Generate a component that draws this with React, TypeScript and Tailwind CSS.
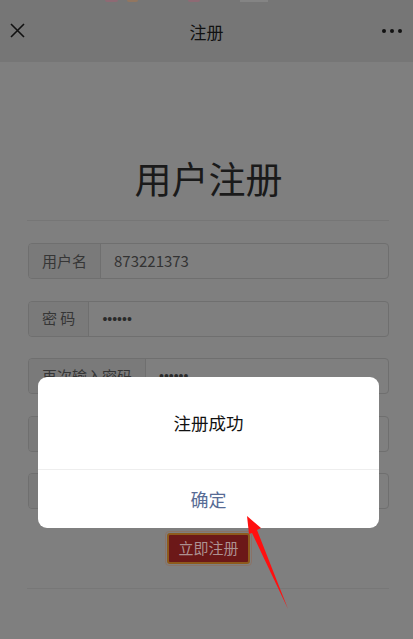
import React from "react";

const FONT = { fontFamily: '"Noto Sans CJK SC", "Noto Sans", Roboto, sans-serif' };

function Row({ label, value, dots }: { label: string; value?: string; dots?: boolean }) {
  return (
    <div className="flex h-[36px] rounded-[4px] border border-[#6f6f6f] overflow-hidden">
      <div className="flex items-center px-[13px] bg-[#7a7a7a] border-r border-[#6f6f6f] text-[15px] text-[#363636] whitespace-pre">
        {label}
      </div>
      <div className="flex items-center pl-[13px] text-[15px] text-[#333333]">
        {dots ? (
          <span
            className="text-[14px] leading-none text-[#2a2a2a]"
            style={{ fontFamily: '"Liberation Sans", Arial, sans-serif' }}
          >
            ••••••
          </span>
        ) : (
          value
        )}
      </div>
    </div>
  );
}

export default function App() {
  return (
    <div className="relative w-[413px] h-[639px] overflow-hidden bg-[#7f7f7f]" style={FONT}>
      {/* header */}
      <div className="relative h-[62px] bg-[#767676] grid grid-cols-[1fr_auto_1fr] items-center px-[10px]">
        <div className="absolute top-0 left-[105px] w-[13px] h-[2px] rounded-b-full bg-[#8e6a74]" />
        <div className="absolute top-0 left-[127px] w-[11px] h-[2px] rounded-b-full bg-[#927660]" />
        <div className="absolute top-0 left-[188px] w-[12px] h-[2px] rounded-b-full bg-[#8e6a74]" />
        <div className="absolute top-0 left-[240px] w-[28px] h-[2px] bg-[#848484]" />
        <div className="flex items-center">
          <svg width="15" height="15" viewBox="0 0 15 15" className="mt-[-1px]">
            <path d="M1 1 L14 14 M14 1 L1 14" stroke="#111" strokeWidth="1.6" />
          </svg>
        </div>
        <div className="text-[17px] text-[#111] leading-none">注册</div>
        <div className="flex justify-end items-center gap-[4px] pr-[1px]">
          <span className="w-[4px] h-[4px] rounded-full bg-[#111]" />
          <span className="w-[4px] h-[4px] rounded-full bg-[#111]" />
          <span className="w-[4px] h-[4px] rounded-full bg-[#111]" />
        </div>
      </div>

      {/* page content */}
      <div className="pl-[28px] pr-[24px]">
        <div className="mt-[94px] text-center text-[37px] leading-[44px] text-[#1a1a1a]">用户注册</div>
        <div className="mt-[20px] h-px bg-[#767676] ml-[-1px]" />
        <div className="mt-[22px] flex flex-col gap-[21.5px]">
          <Row label="用户名" value="873221373" />
          <Row label="密 码" dots />
          <Row label="再次输入密码" dots />
          <Row label="手机号码" />
          <Row label="邮 箱" />
        </div>
        <div className="mt-[22px] flex justify-center">
          <div className="h-[35px] w-[87px] rounded-[4px] border border-[#8a7266] p-px">
            <div className="h-full w-full rounded-[3px] border-2 border-[#8e5a1c] bg-[#6c1818] flex items-center justify-center text-[15px] text-[#ad9292]">
              立即注册
            </div>
          </div>
        </div>
        <div className="mt-[22px] h-px bg-[#777777] ml-[-1px]" />
      </div>

      {/* dialog */}
      <div className="absolute left-[38px] top-[377px] w-[341px] rounded-[9px] bg-white overflow-hidden">
        <div className="h-[92px] flex items-center justify-center text-[17.5px] text-[#111]">注册成功</div>
        <div className="h-px bg-[#eeeeee]" />
        <div className="h-[58px] flex items-center justify-center text-[18px] text-[#576b95]">确定</div>
      </div>

      {/* red arrow annotation */}
      <svg className="absolute inset-0 pointer-events-none" width="413" height="639" viewBox="0 0 413 639">
        <polygon points="247,516 261,528 257,530 288,609 252,533 249,534" fill="#ff1010" />
      </svg>
    </div>
  );
}
